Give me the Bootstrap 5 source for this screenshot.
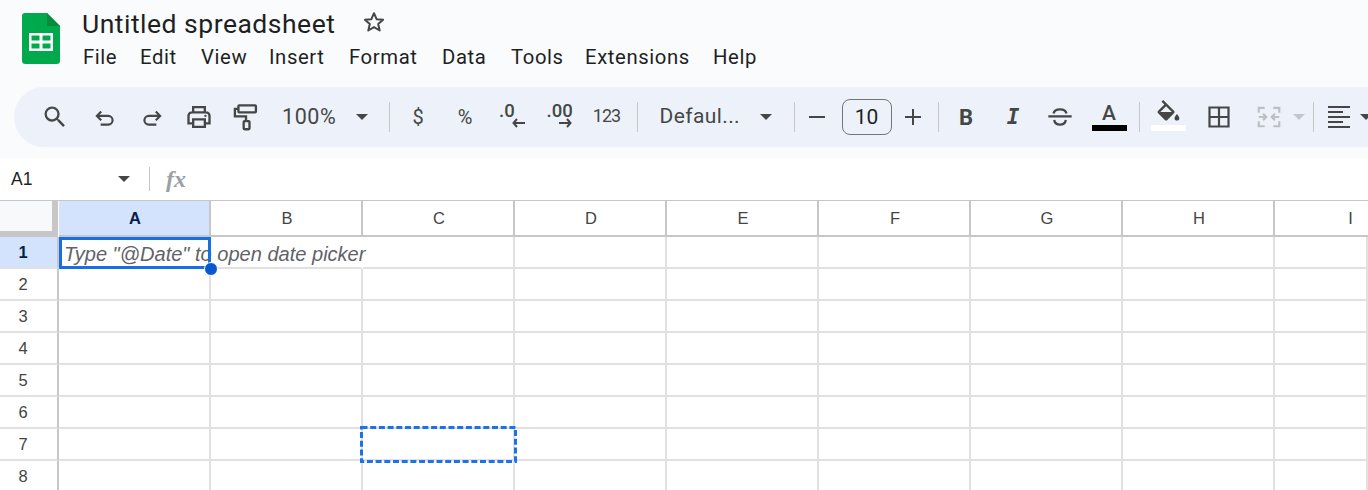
<!DOCTYPE html>
<html lang="en">
<head>
<meta charset="utf-8">
<title>Untitled spreadsheet</title>
<link href="https://cdn.jsdelivr.net/npm/bootstrap@5.3.0/dist/css/bootstrap.min.css" rel="stylesheet">
<style>
html,body{height:490px;overflow:hidden;background:#f9fbfd}
body{font-family:Roboto,"Liberation Sans",sans-serif;color:#1f1f1f}
.app-head{height:87px;padding-left:22px}
.app-logo{width:38px;height:51px;margin-top:13px;flex:none}
.head-text{margin-left:22px;padding-top:7px}
.doc-title{font-size:26.5px;line-height:33px;color:#1f1f1f;letter-spacing:.5px}
.star-btn{margin-left:27px;width:24px;height:24px;margin-top:3px}
.menu-row{margin-top:2px;height:30px;font-size:20.3px;line-height:30px;color:#1f1f1f;letter-spacing:.6px}
.mi-file{margin-left:1px;width:57px}.mi-edit{width:61px}.mi-view{width:68px}.mi-insert{width:80px}.mi-format{width:93px}.mi-data{width:69px}.mi-tools{width:74px}.mi-ext{width:128px}
.tool-pill{margin-left:14px;width:1354px;height:60px;background:#edf2fa;border-radius:30px 0 0 30px;padding-left:16px;color:#444746;overflow:hidden}
.tb{height:60px;display:flex;align-items:center;justify-content:center;flex:none;color:#444746}
.tw47{width:47px}.tw51{width:51px}.tw50{width:50px}.tw45{width:45px}.tw42{width:42px}.tw58{width:58px}.tw38{width:38px}.tw22{width:22px}
.ml15{margin-left:1.5px}
.vsep{width:1px;height:30px;background:#c7c7c7;flex:none}
.after-s45{margin-right:4.5px}.before-7{margin-left:7px}.before-4{margin-left:4px}.before-3{margin-left:3px}
.merge-btn{margin-left:10px}
.zoom-box{width:119.5px;justify-content:flex-start;padding-left:12.5px;font-size:21.5px;letter-spacing:.6px}
.font-box{width:156px;justify-content:flex-start;padding-left:22px;font-size:21px;letter-spacing:.4px}
.drop{width:0;height:0;border-left:6px solid transparent;border-right:6px solid transparent;border-top:6px solid #444746;display:block;flex:none}
.zoom-box .drop{margin-left:20px}
.font-box .drop{margin-left:auto;margin-right:22px}
.tsym{font-size:20px}
.tnum{font-size:18px;letter-spacing:-.9px;padding-left:1px;padding-bottom:3px}
.dec{font-size:18.5px;font-weight:500;line-height:16px;display:block}
.dec-wrap{display:flex;flex-direction:column;margin-top:-4px}
.dec-one{width:26px}.dec-two{width:25px}
.dec-wrap svg{align-self:flex-end;margin-top:-1px}
.size-box{width:50px;height:36px;margin-left:2px;border:1px solid #747775;border-radius:8px;flex:none;font-size:21px;text-align:center;line-height:34px;color:#1f1f1f}
.glyph-b{font:700 22px Roboto,sans-serif}
.glyph-i{font:italic 700 21px "DejaVu Sans Mono",monospace}
.colored{display:flex;flex-direction:column;align-items:center;width:35px;height:36px;justify-content:flex-end;padding-bottom:4px}
.glyph-a{font:500 21px/23px Roboto,sans-serif}
.fill-ic{margin-bottom:-4px}
.bar-k{width:35px;height:6px;background:#000;flex:none}
.bar-w{width:35px;height:6px;background:#fff;flex:none}
.merge-drop{border-top-color:#c3c7cb}
.align-btn{width:46px;padding-left:4px}
.cut-caret{width:8px;justify-content:flex-start;overflow:hidden}
.gap-strip{height:11px}
.fbar{height:42px;background:#fff;padding-left:11px}
.cell-name{width:100px;font:17.5px "Liberation Sans",sans-serif;color:#1f1f1f}
.fbar .drop{margin-left:7px}
.fbar .vsep{height:24px;margin-left:19px}
.fx{margin-left:16px;font:italic 700 24px "Liberation Serif",serif;color:#9aa0a6}
.sheet{position:relative;height:290px;width:1368px;background:#fff;overflow:hidden;border-top:1px solid #c7c7c7}
.cells{display:grid;grid-template-columns:59px repeat(8,152px) 93px;grid-template-rows:36px;grid-auto-rows:32px;font-family:"Liberation Sans",sans-serif}
.hc{display:flex;align-items:center;justify-content:center;background:#fff;border-right:2px solid #c7c7c7;border-bottom:2px solid #c7c7c7;color:#444;font-size:16.5px;padding-left:2px}
.hc-last{border-right:0;padding-left:58px}
.corner{background:#f8f9fa;border-right:6px solid #c7c7c7;border-bottom:6px solid #c7c7c7;margin-right:1px}
.hc-on{background:#d3e3fd;font-weight:700;color:#041e49}
.rc{background:#fff;border-right:2px solid #c7c7c7;padding-right:11px;display:flex;align-items:center;justify-content:center;font-size:16.5px;color:#444;border-bottom:2px solid #e1e1e1}
.rc-on{background:#d3e3fd;font-weight:700;color:#041e49}
.dc{border-right:2px solid #e1e1e1;border-bottom:2px solid #e1e1e1;position:relative;min-width:0}
.dc-over{border-right-color:transparent}
.hint{position:absolute;left:5px;top:3px;white-space:nowrap;font:italic 20.05px/28px "Liberation Sans",sans-serif;color:#5f6368}
.sel-box{position:absolute;left:59px;top:36px;width:152px;height:32px;border:3px solid #1a6fe0;pointer-events:none}
.sel-dot{position:absolute;left:204px;top:61px;width:14px;height:14px;background:#0b57d0;border-radius:50%;border:1px solid #fff}
.clip-box{position:absolute;left:360px;top:225px}
</style>
</head>
<body>
<header class="app-head d-flex">
  <svg class="app-logo" viewBox="0 0 38 51" aria-label="Sheets">
    <path fill="#00a94b" d="M3 0H25L38 13V47.500a3.500 3.500 0 0 1-3.500 3.500H3.500A3.500 3.500 0 0 1 0 47.500V3A3 3 0 0 1 3 0Z"/>
    <path fill="#0a8a3e" d="M25 0 38 13H25Z"/>
    <path fill="#fff" d="M7 20H31V38H7ZM9.500 22.500V27.500H17.500V22.500ZM20.500 22.500V27.500H28.500V22.500ZM9.500 30.500V35.500H17.500V30.500ZM20.500 30.500V35.500H28.500V30.500Z" fill-rule="evenodd"/>
  </svg>
  <div class="head-text">
    <div class="d-flex">
      <div class="doc-title">Untitled spreadsheet</div>
      <svg class="star-btn" viewBox="0 0 24 24" fill="none" stroke="#444746" stroke-width="2" stroke-linejoin="round"><path d="M12 3.200l2.600 6 6.500.6-4.900 4.300 1.500 6.400L12 17.100 6.300 20.500l1.500-6.400-4.900-4.300 6.500-.6Z"/></svg>
    </div>
    <nav class="menu-row d-flex">
      <span class="mi-file">File</span><span class="mi-edit">Edit</span><span class="mi-view">View</span><span class="mi-insert">Insert</span><span class="mi-format">Format</span><span class="mi-data">Data</span><span class="mi-tools">Tools</span><span class="mi-ext">Extensions</span><span>Help</span>
    </nav>
  </div>
</header>

<div class="tool-pill d-flex align-items-center">
  <div class="tb tw50"><svg width="28" height="28" viewBox="0 0 24 24" fill="#444746"><path d="M15.500 14h-.79l-.28-.27A6.471 6.471 0 0 0 16 9.500 6.500 6.500 0 1 0 9.500 16c1.610 0 3.090-.59 4.230-1.570l.27.28v.79l5 4.990L20.490 19l-4.990-5zm-6 0C7.010 14 5 11.990 5 9.500S7.010 5 9.500 5 14 7.010 14 9.500 11.990 14 9.500 14z"/></svg></div>
  <div class="tb tw47 ml15"><svg width="26" height="26" viewBox="0 0 24 24" fill="none" stroke="#444746" stroke-width="2"><path d="M8.500 7 4.500 11l4 4M4.500 11H15a4 4 0 0 1 0 8H8"/></svg></div>
  <div class="tb tw47"><svg width="26" height="26" viewBox="0 0 24 24" fill="none" stroke="#444746" stroke-width="2"><path d="M15.500 7l4 4-4 4M19.500 11H9a4 4 0 0 0 0 8h7"/></svg></div>
  <div class="tb tw47"><svg width="28" height="28" viewBox="0 0 24 24" fill="none" stroke="#444746" stroke-width="2"><path d="M7 8V3.500H17V8M7 17.500H3V11a3 3 0 0 1 3-3H18a3 3 0 0 1 3 3v6.500H17M7 14H17V20.500H7Z"/><circle cx="17.500" cy="11" r="1" fill="#444746" stroke="none"/></svg></div>
  <div class="tb tw47"><svg width="28" height="28" viewBox="0 0 24 24" fill="none" stroke="#444746" stroke-width="2"><rect x="5.500" y="2" width="15" height="6" rx=".7"/><path d="M5.500 5H2.500V11.500H12V15.500"/><rect x="10" y="15.500" width="5" height="7" rx=".8"/></svg></div>
  <div class="tb zoom-box"><span>100%</span><i class="drop"></i></div>
  <div class="vsep after-s45"></div>
  <div class="tb tw47 tsym">$</div>
  <div class="tb tw47 tsym">%</div>
  <div class="tb tw47"><div class="dec-wrap dec-one"><span class="dec">.0</span><svg width="13" height="10" viewBox="0 0 13 10" fill="none" stroke="#444746" stroke-width="2"><path d="M5 1 1.500 5 5 9M1.500 5H13"/></svg></div></div>
  <div class="tb tw47"><div class="dec-wrap dec-two"><span class="dec">.00</span><svg width="13" height="10" viewBox="0 0 13 10" fill="none" stroke="#444746" stroke-width="2"><path d="M8 1l3.500 4L8 9M11.500 5H0"/></svg></div></div>
  <div class="tb tw47 tnum">123</div>
  <div class="vsep before-7"></div>
  <div class="tb font-box"><span>Defaul...</span><i class="drop"></i></div>
  <div class="vsep"></div>
  <div class="tb tw45"><svg width="16" height="4" viewBox="0 0 16 4"><rect y="1" width="16" height="2" fill="#444746"/></svg></div>
  <div class="size-box">10</div>
  <div class="tb tw42"><svg width="18" height="18" viewBox="0 0 18 18" fill="#444746"><path d="M8 1h2v7h7v2h-7v7H8v-7H1V8h7Z"/></svg></div>
  <div class="vsep before-4"></div>
  <div class="tb tw47 before-4 glyph-b">B</div>
  <div class="tb tw47 glyph-i">I</div>
  <div class="tb tw47"><svg width="28" height="28" viewBox="0 0 24 24" fill="none" stroke="#444746" stroke-width="2"><path d="M2 11.500H22M6.500 9C7 6.500 9.500 5.500 12 5.500s5 1 5.500 3.500M7 14.500c.5 2.500 2.500 4 5 4s4.500-1.500 5-4"/></svg></div>
  <div class="tb tw51"><div class="colored"><span class="glyph-a">A</span><div class="bar-k"></div></div></div>
  <div class="vsep before-4"></div>
  <div class="tb tw58"><div class="colored"><svg class="fill-ic" width="29" height="29" viewBox="0 0 24 24" fill="#444746"><path d="M16.560 8.940 7.620 0 6.210 1.410l2.380 2.380-5.150 5.150c-.59.590-.59 1.540 0 2.120l5.500 5.500c.29.290.68.440 1.060.440s.77-.15 1.060-.44l5.500-5.500c.59-.58.59-1.530 0-2.120zM5.210 10 10 5.210 14.790 10H5.210zM19 11.500s-2 2.170-2 3.500c0 1.100.9 2 2 2s2-.9 2-2c0-1.330-2-3.500-2-3.500z"/></svg><div class="bar-w"></div></div></div>
  <div class="tb tw42"><svg width="24" height="24" viewBox="0 0 24 24" fill="none" stroke="#444746" stroke-width="2.200"><path d="M2.500 2.500H21.500V21.500H2.500ZM12 2.500V21.500M2.500 12H21.500"/></svg></div>
  <div class="tb tw38 merge-btn"><svg width="26" height="26" viewBox="0 0 24 24" fill="none" stroke="#bcc0c4" stroke-width="2"><path d="M8 3.500H2.500V8M16 3.500H21.500V8M8 20.500H2.500V16M16 20.500H21.500V16M2.500 12H9M6.500 9l3 3-3 3M21.500 12H15M17.500 9l-3 3 3 3"/></svg></div>
  <div class="tb tw22"><i class="drop merge-drop"></i></div>
  <div class="vsep before-3"></div>
  <div class="tb align-btn"><svg width="22" height="22" viewBox="0 0 22 22" fill="#444746"><path d="M0 0H22V2H0ZM0 5H15V7H0ZM0 10H22V12H0ZM0 15H15V17H0ZM0 20H22V22H0Z"/></svg></div>
  <div class="tb cut-caret"><i class="drop"></i></div>
</div>
<div class="gap-strip"></div>

<div class="fbar d-flex align-items-center">
  <div class="cell-name">A1</div>
  <i class="drop"></i>
  <div class="vsep"></div>
  <div class="fx">fx</div>
</div>

<main class="sheet">
  <div class="cells">
    <div class="hc corner"></div><div class="hc hc-on">A</div><div class="hc">B</div><div class="hc">C</div><div class="hc">D</div><div class="hc">E</div><div class="hc">F</div><div class="hc">G</div><div class="hc">H</div><div class="hc hc-last">I</div>
    <div class="rc rc-on">1</div><div class="dc dc-over"><span class="hint">Type "@Date" to open date picker</span></div><div class="dc dc-over"></div><div class="dc"></div><div class="dc"></div><div class="dc"></div><div class="dc"></div><div class="dc"></div><div class="dc"></div><div class="dc"></div>
    <div class="rc">2</div><div class="dc"></div><div class="dc"></div><div class="dc"></div><div class="dc"></div><div class="dc"></div><div class="dc"></div><div class="dc"></div><div class="dc"></div><div class="dc"></div>
    <div class="rc">3</div><div class="dc"></div><div class="dc"></div><div class="dc"></div><div class="dc"></div><div class="dc"></div><div class="dc"></div><div class="dc"></div><div class="dc"></div><div class="dc"></div>
    <div class="rc">4</div><div class="dc"></div><div class="dc"></div><div class="dc"></div><div class="dc"></div><div class="dc"></div><div class="dc"></div><div class="dc"></div><div class="dc"></div><div class="dc"></div>
    <div class="rc">5</div><div class="dc"></div><div class="dc"></div><div class="dc"></div><div class="dc"></div><div class="dc"></div><div class="dc"></div><div class="dc"></div><div class="dc"></div><div class="dc"></div>
    <div class="rc">6</div><div class="dc"></div><div class="dc"></div><div class="dc"></div><div class="dc"></div><div class="dc"></div><div class="dc"></div><div class="dc"></div><div class="dc"></div><div class="dc"></div>
    <div class="rc">7</div><div class="dc"></div><div class="dc"></div><div class="dc"></div><div class="dc"></div><div class="dc"></div><div class="dc"></div><div class="dc"></div><div class="dc"></div><div class="dc"></div>
    <div class="rc">8</div><div class="dc"></div><div class="dc"></div><div class="dc"></div><div class="dc"></div><div class="dc"></div><div class="dc"></div><div class="dc"></div><div class="dc"></div><div class="dc"></div>
  </div>
  <div class="sel-box"></div>
  <div class="sel-dot"></div>
  <svg class="clip-box" width="157" height="37" viewBox="0 0 157 37" fill="none"><rect x="1.500" y="1.500" width="154" height="34" stroke="#1a73e8" stroke-width="3" stroke-dasharray="6 2.700"/></svg>
</main>
<script src="https://cdn.jsdelivr.net/npm/bootstrap@5.3.0/dist/js/bootstrap.bundle.min.js"></script>
</body>
</html>
